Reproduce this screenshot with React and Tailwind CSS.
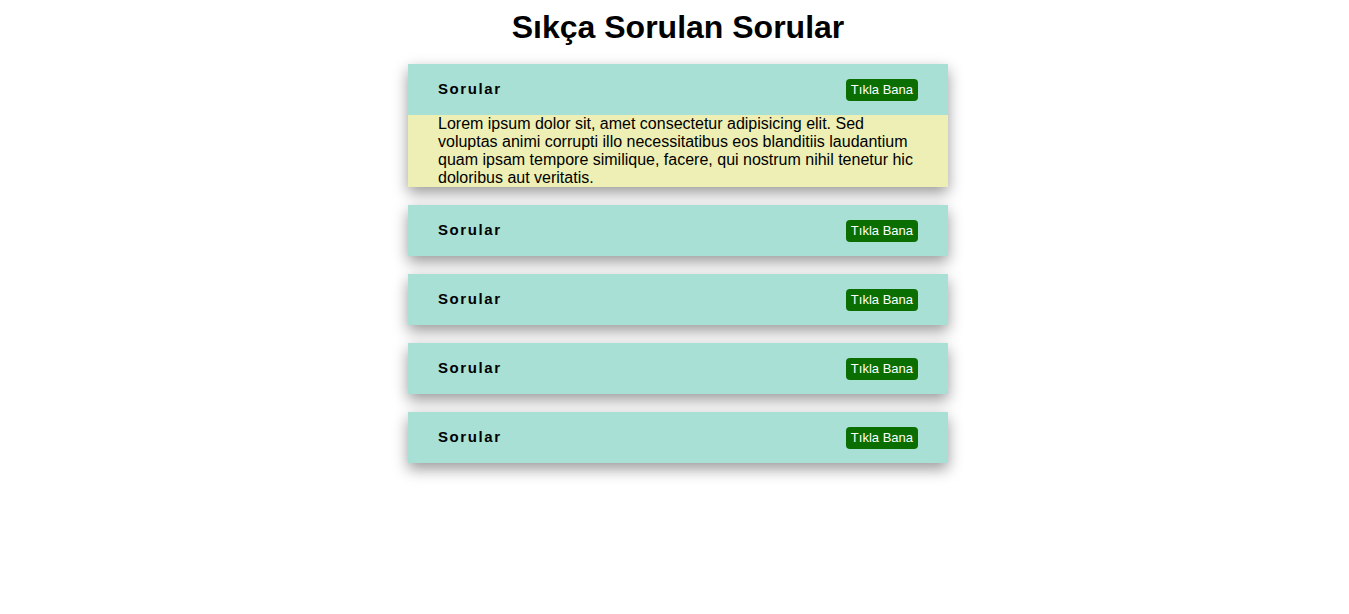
import React, { useState } from 'react';

const LOREM =
	'Lorem ipsum dolor sit, amet consectetur adipisicing elit. Sed voluptas animi corrupti illo necessitatibus eos blanditiis laudantium quam ipsam tempore similique, facere, qui nostrum nihil tenetur hic doloribus aut veritatis.';

function Soru({ open, onToggle }) {
	return (
		<div className="w-[540px] shadow-[0_6px_14px_rgba(0,0,0,0.4)]">
			<div className="flex h-[51px] items-center justify-between bg-[#a8e0d6] px-[30px]">
				<h3 className="text-[15px] font-bold tracking-[1.6px] text-black">Sorular</h3>
				<button
					onClick={onToggle}
					className="h-[22px] rounded-[4px] bg-[#0a6e00] px-[5px] text-[13px] leading-[22px] text-white"
				>
					Tıkla Bana
				</button>
			</div>
			{open && (
				<div className="bg-[#eeefb4] px-[30px] text-[16px] leading-[18px] text-black">
					{LOREM}
				</div>
			)}
		</div>
	);
}

export default function App() {
	const [acik, setAcik] = useState(0);

	return (
		<div className="flex min-h-[614px] flex-col items-center bg-white pl-[7px] font-['Liberation_Sans',Arial,sans-serif]">
			<h1 className="mt-[9px] text-[32px] font-bold leading-[37px] text-black">
				Sıkça Sorulan Sorular
			</h1>
			<div className="mt-[18px] flex flex-col gap-[18px]">
				{[0, 1, 2, 3, 4].map((i) => (
					<Soru key={i} open={acik === i} onToggle={() => setAcik(acik === i ? -1 : i)} />
				))}
			</div>
		</div>
	);
}
